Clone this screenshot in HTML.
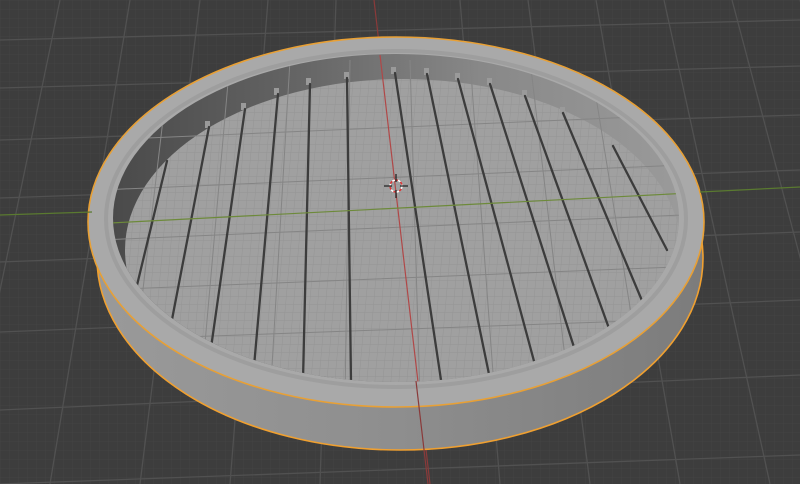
<!DOCTYPE html>
<html><head><meta charset="utf-8"><style>
html,body{margin:0;padding:0;background:#3d3d3d;overflow:hidden}
svg{display:block}
</style></head><body>
<svg width="800" height="484" viewBox="0 0 800 484" xmlns="http://www.w3.org/2000/svg">
<defs>
<pattern id="fine" width="9" height="9" patternUnits="userSpaceOnUse">
<path d="M0 0H9M0 0V9" stroke="#434343" stroke-width="1" fill="none"/>
</pattern>
<pattern id="ffine" width="8" height="8" patternUnits="userSpaceOnUse" patternTransform="skewX(-5)">
<rect width="8" height="8" fill="#a0a0a0"/>
<path d="M0 0H8M0 0V8" stroke="#929292" stroke-width="0.8" fill="none"/>
</pattern>
<linearGradient id="side" x1="0" x2="1" y1="0" y2="0">
<stop offset="0" stop-color="#9a9a9a"/><stop offset="0.5" stop-color="#8e8e8e"/><stop offset="1" stop-color="#7c7c7c"/>
</linearGradient>
<linearGradient id="wall" x1="0" x2="1" y1="0" y2="0">
<stop offset="0" stop-color="#4a4a4a"/><stop offset="0.3" stop-color="#626262"/><stop offset="0.65" stop-color="#888"/><stop offset="1" stop-color="#9a9a9a"/>
</linearGradient>
<clipPath id="innerc"><ellipse cx="396" cy="218" rx="283" ry="164"/></clipPath>
</defs>
<rect width="800" height="484" fill="#3d3d3d"/>
<rect width="800" height="484" fill="url(#fine)"/>
<g stroke="#515151" stroke-width="1.3" fill="none">
<path d="M0 40L800 20M0 88L800 66M0 140L800 115M0 198L800 170M0 262L800 232M0 332L800 300M0 410L800 375M0 484L800 455"/>
<path d="M60 0L-40 484M130 0L50 484M200 0L140 484M268 0L230 484M336 0L320 484M460 0L500 484M528 0L590 484M596 0L680 484M664 0L770 484M732 0L860 484M800 0L950 484"/>
</g>
<line x1="374" y1="0" x2="430" y2="484" stroke="#8a3a3a" stroke-width="1.2"/>
<!-- side band -->
<ellipse cx="400" cy="258" rx="303" ry="192" fill="url(#side)"/>
<path d="M88 224 L97 258 A303 192 0 0 0 703 258 L703 210 Z" fill="url(#side)"/>
<ellipse cx="400" cy="258" rx="303" ry="192" fill="none" stroke="#f0a030" stroke-width="1.6"/>
<!-- top rim -->
<ellipse cx="396" cy="222" rx="308" ry="185" fill="#a9a9a9" stroke="#e8a035" stroke-width="1.6"/>
<ellipse cx="396" cy="219" rx="290" ry="168" fill="none" stroke="#9e9e9e" stroke-width="4"/>
<!-- inner opening wall -->
<ellipse cx="396" cy="218" rx="283" ry="164" fill="url(#wall)"/>
<g clip-path="url(#innerc)">
<!-- floor -->
<ellipse cx="403" cy="250" rx="278" ry="171" fill="url(#ffine)"/>
<g stroke="#858585" stroke-width="1" fill="none">
<path d="M100 140L800 110M100 190L800 160M100 240L800 210M100 290L800 262M100 340L800 315"/>
<path d="M170 60L130 400M230 60L200 400M290 60L270 400M350 60L345 400M410 60L420 400M470 60L495 400M530 60L570 400M590 60L645 400"/>
</g>
<!-- nubs on wall -->
<g fill="#9a9a9a">
<rect x="205" y="121" width="5" height="7"/><rect x="241" y="103" width="5" height="7"/><rect x="274" y="88" width="5" height="7"/>
<rect x="306" y="78" width="5" height="7"/><rect x="344" y="72" width="5" height="7"/><rect x="391" y="67" width="5" height="7"/>
<rect x="424" y="68" width="5" height="7"/><rect x="455" y="73" width="5" height="7"/><rect x="487" y="78" width="5" height="7"/>
<rect x="522" y="90" width="5" height="7"/><rect x="560" y="107" width="5" height="7"/>
</g>
<g stroke="#3c3c3c" stroke-width="2.3" fill="none" stroke-linecap="round">
<path d="M167 161L131 310"/>
<path d="M209 127L165 356"/>
<path d="M245 109L207 376"/>
<path d="M278 94L253 378"/>
<path d="M310 84L303 380"/>
<path d="M347 78L351 381"/>
<path d="M395 73L441 380"/>
<path d="M427 74L490 379"/>
<path d="M458 79L538 376"/>
<path d="M490 84L580 366"/>
<path d="M525 96L619 356"/>
<path d="M563 113L651 322"/>
<path d="M613 146L667 250"/>
</g>
<line x1="380" y1="55" x2="418" y2="382" stroke="#b04848" stroke-width="1.2"/>
<line x1="110" y1="223" x2="690" y2="193" stroke="#6d8a3a" stroke-width="1.2"/>
</g>
<line x1="700" y1="192" x2="800" y2="187" stroke="#5a7a30" stroke-width="1.2"/>
<line x1="0" y1="215" x2="92" y2="212" stroke="#5a7a30" stroke-width="1.2"/>
<line x1="416" y1="381" x2="428" y2="484" stroke="#8a3a3a" stroke-width="1.2"/>
<!-- 3D cursor -->
<g transform="translate(396,186)">
<circle r="6" fill="none" stroke="#fff" stroke-width="1.5" stroke-dasharray="3 3"/>
<circle r="6" fill="none" stroke="#d33" stroke-width="1.5" stroke-dasharray="3 3" stroke-dashoffset="3"/>
<path d="M-12 0H-4M4 0H12M0 -12V-4M0 4V12" stroke="#222" stroke-width="1.3"/>
</g>
</svg>
</body></html>
